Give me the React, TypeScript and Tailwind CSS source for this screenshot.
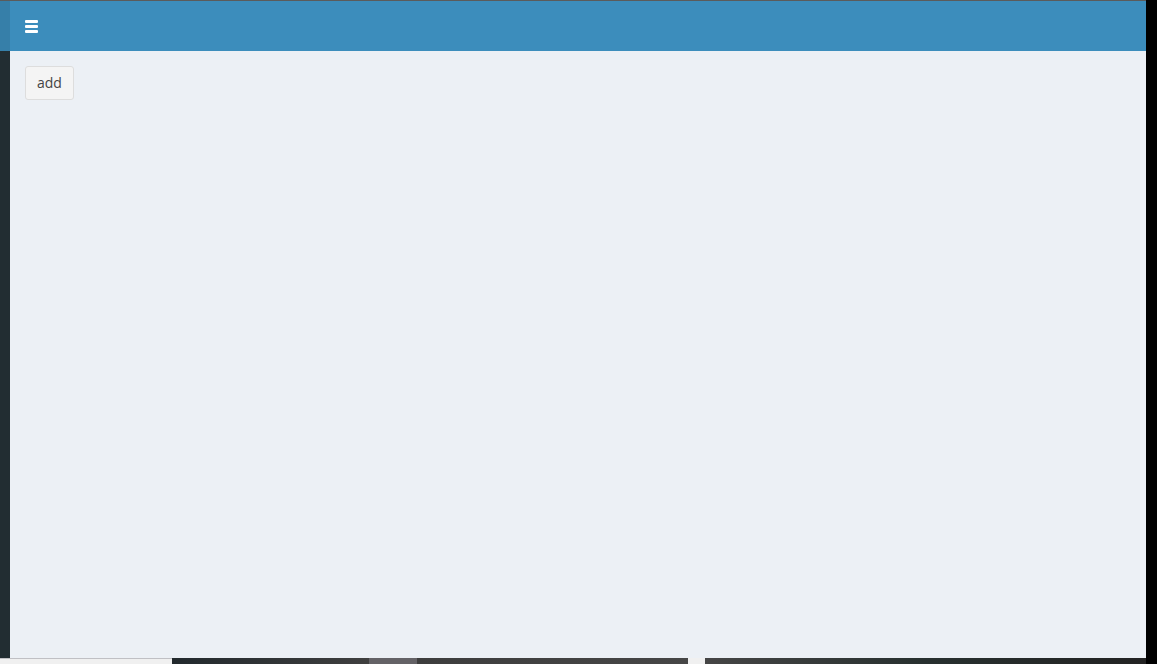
import React from "react";

export default function App() {
  return (
    <div className="w-[1157px] h-[664px] flex flex-col bg-black overflow-hidden font-['Open_Sans',sans-serif]">
      {/* window top edge */}
      <div className="h-px bg-[#5b5b5b] w-[1146px] shrink-0" />

      <div className="flex flex-1 min-h-0">
        {/* collapsed sidebar */}
        <div className="w-[10px] flex flex-col shrink-0">
          <div className="h-[50px] bg-[#367fa9]" />
          <div className="flex-1 bg-[#222d32]" />
        </div>

        {/* main */}
        <div className="w-[1136px] flex flex-col">
          <header className="h-[50px] bg-[#3c8dbc] flex items-center px-[15px] shrink-0">
            <button className="flex flex-col gap-[2px] w-[13px]">
              <span className="h-[3px] bg-white block rounded-[1px]" />
              <span className="h-[3px] bg-white block rounded-[1px]" />
              <span className="h-[3px] bg-white block rounded-[1px]" />
            </button>
          </header>
          <main className="flex-1 bg-[#ecf0f5] px-[15px] pt-[15px]">
            <button className="h-[34px] px-[11px] bg-[#f4f4f4] border border-[#dddddd] rounded-[3px] text-sm text-[#444] leading-none">
              add
            </button>
          </main>
        </div>

        {/* right edge */}
        <div className="flex-1 bg-black" />
      </div>

      {/* taskbar strip */}
      <div className="h-[6px] flex shrink-0">
        <div className="w-[172px] bg-[#f0f0f0] border-t border-[#c0c0c4]" />
        <div className="w-[197px] bg-gradient-to-r from-[#22292d] to-[#3f3f3f]" />
        <div className="w-[48px] bg-[#646266]" />
        <div className="w-[271px] bg-gradient-to-r from-[#3d3d3d] to-[#464646]" />
        <div className="w-[17px] bg-[#f0f0f0]" />
        <div className="w-[441px] bg-gradient-to-r from-[#454545] via-[#27302f] to-[#232323]" />
        <div className="flex-1 bg-black" />
      </div>
    </div>
  );
}
